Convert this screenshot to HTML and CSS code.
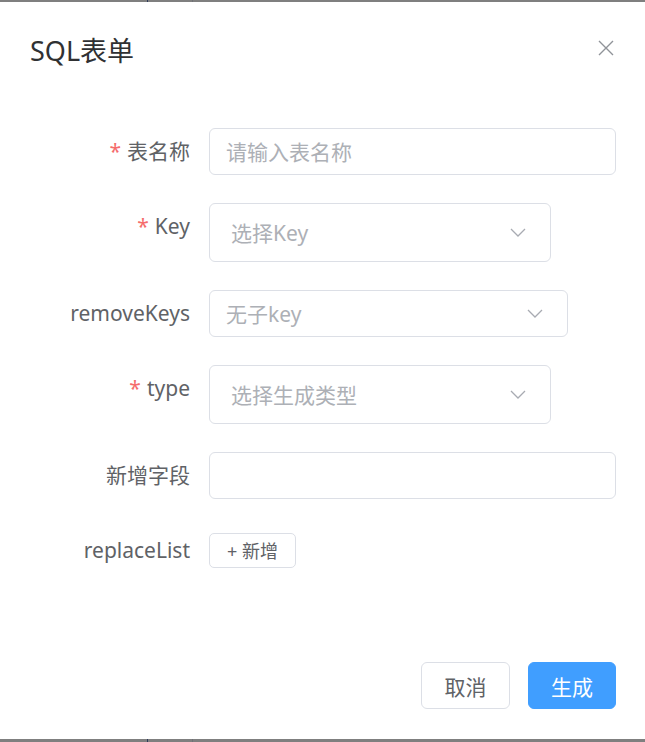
FILE: index.html
```html
<!DOCTYPE html>
<html lang="zh-CN">
<head>
<meta charset="utf-8">
<title>SQL表单</title>
<link rel="stylesheet" href="styles.css">
</head>
<body>
<div class="dialog">
  <div class="dialog-header">
    <span class="dialog-title">SQL表单</span>
    <button class="dialog-close" aria-label="关闭">
      <svg width="16" height="16" viewBox="0 0 16 16"><path d="M1 1 L15 15 M15 1 L1 15" stroke="#909399" stroke-width="1.4" fill="none"/></svg>
    </button>
  </div>
  <div class="dialog-body">
    <form class="form">
      <div class="form-item">
        <label class="form-label required">表名称</label>
        <div class="form-content">
          <div class="input w-full"><span class="placeholder">请输入表名称</span></div>
        </div>
      </div>
      <div class="form-item">
        <label class="form-label required">Key</label>
        <div class="form-content">
          <div class="select tall w-342"><span class="placeholder pad-lg">选择Key</span><span class="arrow"><svg width="16" height="9" viewBox="0 0 16 9"><path d="M1 1 L8 8 L15 1" stroke="#a8abb2" stroke-width="1.3" fill="none"/></svg></span></div>
        </div>
      </div>
      <div class="form-item">
        <label class="form-label">removeKeys</label>
        <div class="form-content">
          <div class="select w-359"><span class="placeholder">无子key</span><span class="arrow"><svg width="16" height="9" viewBox="0 0 16 9"><path d="M1 1 L8 8 L15 1" stroke="#a8abb2" stroke-width="1.3" fill="none"/></svg></span></div>
        </div>
      </div>
      <div class="form-item">
        <label class="form-label required">type</label>
        <div class="form-content">
          <div class="select tall w-342"><span class="placeholder pad-lg">选择生成类型</span><span class="arrow"><svg width="16" height="9" viewBox="0 0 16 9"><path d="M1 1 L8 8 L15 1" stroke="#a8abb2" stroke-width="1.3" fill="none"/></svg></span></div>
        </div>
      </div>
      <div class="form-item">
        <label class="form-label">新增字段</label>
        <div class="form-content">
          <div class="input w-full"></div>
        </div>
      </div>
      <div class="form-item">
        <label class="form-label">replaceList</label>
        <div class="form-content center">
          <button type="button" class="btn-small">+ 新增</button>
        </div>
      </div>
    </form>
  </div>
  <div class="dialog-footer">
    <button class="btn">取消</button>
    <button class="btn primary">生成</button>
  </div>
</div>
</body>
</html>
```
FILE: styles.css
```css
html, body {
  margin: 0;
  padding: 0;
}
body {
  width: 645px;
  height: 742px;
  background-color: #7f7f7f;
  background-image:
    linear-gradient(to right, transparent 147px, #2d3a5c 147px, #2d3a5c 148px, transparent 148px, transparent 192px, #6f7177 192px, #6f7177 193px, transparent 193px);
  padding-top: 2px;
  box-sizing: border-box;
  font-family: "Noto Sans", "Noto Sans CJK SC", sans-serif;
  overflow: hidden;
}
.dialog {
  background: #fff;
  width: 645px;
  box-sizing: border-box;
}
.dialog-header {
  padding: 30px 30px 15px;
  display: flex;
  justify-content: space-between;
  align-items: center;
  height: 36px;
}
.dialog-title {
  font-size: 27px;
  line-height: 36px;
  color: #303133;
  margin-top: 2px;
}
.dialog-close {
  border: none;
  background: none;
  padding: 0;
  width: 16px;
  height: 16px;
  margin-right: 1px;
  margin-top: -4px;
  display: flex;
}
.dialog-body {
  padding: 45px 29px 73px 30px;
}
.form {
  display: flex;
  flex-direction: column;
  gap: 28px;
}
.form-item {
  display: grid;
  grid-template-columns: 179px 1fr;
}
.form-label {
  font-size: 21px;
  line-height: 47px;
  color: #606266;
  text-align: right;
  padding-right: 19px;
}
.form-label.required::before {
  content: "*";
  color: #f56c6c;
  margin-right: 6px;
}
.form-content {
  display: flex;
}
.form-content.center {
  align-items: center;
  height: 47px;
}
.input, .select {
  height: 47px;
  border: 1px solid #dcdfe6;
  border-radius: 6px;
  box-sizing: border-box;
  display: flex;
  align-items: center;
  font-size: 21px;
}
.select.tall {
  height: 59px;
}
.w-full { width: 407px; }
.w-342 { width: 342px; }
.w-359 { width: 359px; }
.placeholder {
  color: #adb0b6;
  padding-left: 16px;
  flex: 1;
  margin-top: -2px;
}
.placeholder.pad-lg {
  padding-left: 21px;
}
.arrow {
  display: flex;
  margin-right: 24px;
}
.btn-small {
  font-family: inherit;
  font-size: 18px;
  color: #606266;
  background: #fff;
  border: 1px solid #dcdfe6;
  border-radius: 5px;
  height: 35px;
  width: 87px;
  padding: 0;
  line-height: 1;
}
.dialog-footer {
  padding: 15px 29px 30px 30px;
  display: flex;
  justify-content: flex-end;
  gap: 18px;
}
.btn {
  font-family: inherit;
  font-size: 21px;
  height: 47px;
  width: 89px;
  padding: 0;
  border-radius: 6px;
  border: 1px solid #dcdfe6;
  background: #fff;
  color: #606266;
}
.btn.primary {
  background: #409eff;
  border-color: #409eff;
  color: #fff;
  width: 88px;
}
```
